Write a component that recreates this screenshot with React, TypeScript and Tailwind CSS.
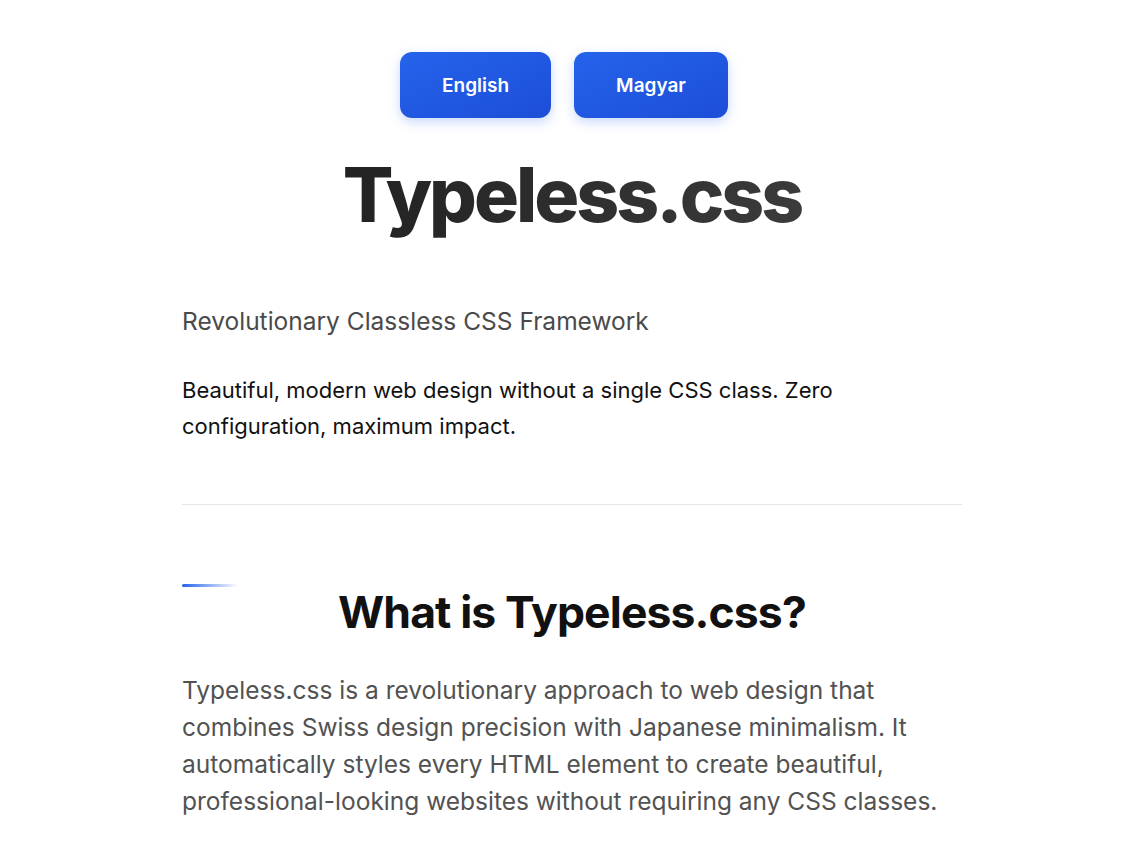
import React from "react";

const languages = ["English", "Magyar"];

export default function App() {
  return (
    <div className="min-h-screen bg-white font-['Inter',sans-serif] text-[#111]">
      <div className="mx-auto w-[802px] pl-[22px]">
        <nav className="flex justify-center gap-[23px] pr-4 pt-[52px]">
          {languages.map((lang) => (
            <button
              key={lang}
              className="h-[66px] rounded-xl bg-gradient-to-br from-[#2563eb] to-[#1d4ed8] px-[42px] pt-[2px] text-[19px] font-semibold text-white shadow-[0_4px_12px_rgba(37,99,235,0.25)]"
            >
              {lang}
            </button>
          ))}
        </nav>

        <h1 className="mt-[29px] bg-gradient-to-r from-[#1a1a1a] to-[#444] bg-clip-text text-center text-[75px] leading-[96px] font-extrabold tracking-[-0.04em] text-transparent">
          Typeless.css
        </h1>

        <p className="mt-[62px] text-[24.5px] leading-[32px] text-[#4a4a4a]">
          Revolutionary Classless CSS Framework
        </p>
        <p className="mt-[35px] text-[22px] leading-[36px] text-[#111]">
          Beautiful, modern web design without a single CSS class. Zero
          configuration, maximum impact.
        </p>

        <hr className="mt-[60px] border-t border-[#e5e5e5]" />

        <section className="mt-[79px]">
          <div className="h-[3px] w-[56px] rounded-full bg-gradient-to-r from-[#2563eb] to-transparent" />
          <h2 className="mt-[1px] text-center text-[44.5px] leading-[48px] font-bold tracking-[-0.02em] text-[#111]">
            What is Typeless.css?
          </h2>
          <p className="mt-[36px] text-[24.5px] leading-[37px] text-[#525252]">
            Typeless.css is a revolutionary approach to web design that
            combines Swiss design precision with Japanese minimalism. It
            automatically styles every HTML element to create beautiful,
            professional-looking websites without requiring any CSS classes.
          </p>
        </section>
      </div>
    </div>
  );
}
